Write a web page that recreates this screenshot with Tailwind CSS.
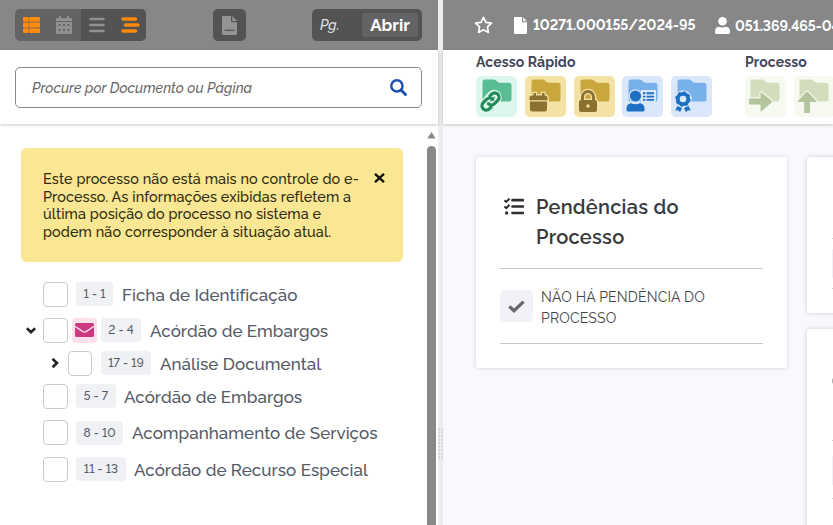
<!DOCTYPE html>
<html lang="pt-BR">
<head>
<meta charset="utf-8">
<title>e-Processo</title>
<script src="https://cdn.jsdelivr.net/npm/@tailwindcss/browser@4"></script>
</head>
<body class="w-[833px] h-[525px] overflow-hidden bg-white font-['Raleway','Lato','Open_Sans',sans-serif] lining-nums whitespace-nowrap">
<svg class="hidden">
  <symbol id="folder" viewBox="0 0 41 41"><path d="M9 3.5h8.5q1.5 0 2.5 1l1.800 1.500q1 .8 2.500.8H33q2.500 0 2.500 2.500V23q0 2.500-2.500 2.500H9Q6.500 25.500 6.500 23V6Q6.500 3.500 9 3.500z"/></symbol>
</svg>
<div class="flex h-full">
  <aside class="w-[438px] shrink-0 flex flex-col bg-white">
    <header class="h-[50px] shrink-0 bg-[#878787] pl-[15px] pt-[9px] flex items-start">
      <div class="flex h-8 w-[131px] rounded-[5px] overflow-hidden bg-[#636363]">
        <div class="w-[66px] flex items-center">
          <svg class="ml-2 w-[17px] h-[16px]" viewBox="0 0 17 16" fill="#ff8b0d"><path fill="#a87038" d="M1 1h15v14H1z"/><path d="M1 0h4.500v4.500H0V1q0-1 1-1zM6.500 0H16q1 0 1 1v3.500H6.500zM0 5.700h5.500v4.500H0zM6.500 5.700H17v4.500H6.500zM0 11.400h5.500V16H1q-1 0-1-1zM6.500 11.400H17V15q0 1-1 1H6.500z"/></svg>
          <svg class="ml-4 w-4 h-[18px]" viewBox="0 0 16 18"><path fill="#909090" d="M3 0h2v2h6V0h2v2h1.500Q16 2 16 3.500V5H0V3.500Q0 2 1.500 2H3zM0 6h16v10.500q0 1.500-1.500 1.500h-13Q0 18 0 16.500z"/><path d="M2.500 8h2v2h-2zM7 8h2v2H7zM11.500 8h2v2h-2zM2.500 13h2v2h-2zM7 13h2v2H7zM11.500 13h2v2h-2z" fill="#636363"/></svg>
        </div>
        <div class="flex-1 bg-[#535353] flex items-center">
          <svg class="ml-2 w-4 h-4" viewBox="0 0 16 16" stroke="#909090" stroke-width="2.300" stroke-linecap="round"><path d="M1.300 2h13.400M1.300 8h13.400M1.300 14h13.400"/></svg>
          <svg class="ml-4 w-[19px] h-4" viewBox="0 0 19 16" stroke="#ff8b0d" stroke-width="3.500" stroke-linecap="round"><path d="M2 2h12.500M4.500 8h12.500M2 14h12.500"/></svg>
        </div>
      </div>
      <div class="ml-[66.500px] w-[33px] h-8 rounded-[5px] bg-[#535353] flex items-center justify-center">
        <svg class="w-[15px] h-[19px]" viewBox="0 0 15 19"><path fill="#949494" d="M1.200 0H9v5q0 1.200 1.200 1.200H15V17.800Q15 19 13.800 19H1.200Q0 19 0 17.800V1.200Q0 0 1.200 0zM10.200 0L15 5H10.200z"/><path stroke="#535353" stroke-width="1.300" d="M2.500 14.300h10"/></svg>
      </div>
      <div class="ml-[66.500px] w-[110px] h-8 rounded-[5px] bg-[#535353] flex items-center pl-2 pr-1">
        <span class="italic font-medium text-[14px] text-[#e4e4e4]">Pg.</span>
        <span class="ml-auto w-[56px] h-6 rounded-[3px] bg-[#636363] text-white font-bold text-[17px] leading-[25px] text-center">Abrir</span>
      </div>
    </header>
    <div class="h-[74px] shrink-0 pt-[17px] pl-[15px] bg-white shadow-[0_1px_3px_rgba(0,0,0,0.22)] z-10">
      <div class="w-[407px] h-[41px] border border-[#888] rounded-[5px] flex items-center justify-between pl-4 pr-[14px]">
        <span class="italic font-medium text-[14px] leading-5 pt-px tracking-[0.04px] text-[#666]">Procure por Documento ou Página</span>
        <svg class="w-[17px] h-[17px]" viewBox="0 0 17 17" fill="none" stroke="#1c50b0"><circle cx="6.900" cy="6.900" r="5.600" stroke-width="2.400"/><path d="M11 11l4.500 4.500" stroke-width="2.900" stroke-linecap="round"/></svg>
      </div>
    </div>
    <div class="flex-1 flex">
      <main class="w-[427px] pl-[21px] pt-6">
        <div class="w-[382px] h-[114px] rounded-[6px] bg-[#f9e793] pl-[22px] pt-[22px] flex items-start text-[#302b12] font-medium text-[14.400px] leading-[17.700px]">
          <p class="w-[331px] tracking-[0.11px]">Este processo não está mais no controle do e-<br>Processo. As informações exibidas refletem a<br>última posição do processo no sistema e<br>podem não corresponder à situação atual.</p>
          <svg class="mt-[3px] w-[11px] h-[10px]" viewBox="0 0 11 10" stroke="#111" stroke-width="2.300"><path d="M1 .8l9 8.400M10 .8L1 9.200"/></svg>
        </div>
        <ul class="pt-[13.500px] text-[17px] font-medium tracking-[0.04px] text-[#545a67]">
          <li class="h-[37px] flex items-center pl-[22px]"><i class="w-[25px] h-[25px] rounded-[4px] border border-[#c9c9cf]"></i><b class="ml-2 w-[37px] h-6 rounded-[4px] bg-[#f0f1f4] font-medium text-[12px] leading-6 text-center text-[#555b66]">1 - 1</b><span class="ml-[9px] pt-[3px]">Ficha de Identificação</span></li>
          <li class="h-[35px] flex items-center pl-[5px]"><svg class="w-[10px] h-[7px] mr-[7px]" viewBox="0 0 10 7" fill="none" stroke="#222" stroke-width="2.600"><path d="M.8 1.300L5 5.200 9.200 1.300"/></svg><i class="w-[25px] h-[25px] rounded-[4px] border border-[#c9c9cf]"></i><em class="ml-1 w-[25px] h-[25px] rounded-[4px] bg-[#fbe0ec] flex items-center justify-center"><svg class="mr-px w-[19px] h-[14px]" viewBox="0 0 19 14"><rect width="19" height="14" rx="1.500" fill="#cb3980"/><path d="M0 3.200l7.500 5.200q2 1.300 4 0L19 3.200" fill="none" stroke="#fbe0ec" stroke-width="1.300"/></svg></em><b class="ml-1 w-10 h-6 rounded-[4px] bg-[#f0f1f4] font-medium text-[12px] leading-[25px] text-center text-[#555b66]">2 - 4</b><span class="ml-[9px] pt-[3px]">Acórdão de Embargos</span></li>
          <li class="h-[31px] flex items-center pl-[30px]"><svg class="w-[8px] h-[10px] mr-[9px]" viewBox="0 0 8 10" fill="none" stroke="#222" stroke-width="2.600"><path d="M1.500.8L6 5 1.500 9.200"/></svg><i class="w-[24px] h-[25px] rounded-[4px] border border-[#c9c9cf]"></i><b class="ml-[9px] w-[50px] h-6 rounded-[4px] bg-[#f0f1f4] font-medium text-[12px] leading-[25px] text-center text-[#555b66]">17 - 19</b><span class="ml-[9px] pt-[3px]">Análise Documental</span></li>
          <li class="h-[35px] flex items-center pl-[22px]"><i class="w-[25px] h-[25px] rounded-[4px] border border-[#c9c9cf]"></i><b class="ml-2 w-10 h-6 rounded-[4px] bg-[#f0f1f4] font-medium text-[12px] leading-6 text-center text-[#555b66]">5 - 7</b><span class="ml-[8px] pt-[3px]">Acórdão de Embargos</span></li>
          <li class="h-[38px] flex items-center pl-[22px]"><i class="w-[25px] h-[25px] rounded-[4px] border border-[#c9c9cf]"></i><b class="ml-2 w-[47px] h-6 rounded-[4px] bg-[#f0f1f4] font-medium text-[12px] leading-6 text-center text-[#555b66]">8 - 10</b><span class="ml-[9px] pt-[2px]">Acompanhamento de Serviços</span></li>
          <li class="h-[35px] flex items-center pl-[22px]"><i class="w-[25px] h-[25px] rounded-[4px] border border-[#c9c9cf]"></i><b class="ml-2 w-[50px] h-6 rounded-[4px] bg-[#f0f1f4] font-medium text-[12px] leading-[25px] text-center text-[#555b66]">11 - 13</b><span class="ml-[8px] pt-[3px]">Acórdão de Recurso Especial</span></li>
        </ul>
      </main>
      <div class="w-[9px] flex flex-col items-center pt-2">
        <svg class="w-[9px] h-[7px] shrink-0" viewBox="0 0 9 7" fill="#868686"><path d="M4.500 0L8.600 6.500H.4z"/></svg>
        <div class="mt-[7px] w-[9px] flex-1 rounded-t-[4.500px] bg-[#888]"></div>
      </div>
    </div>
  </aside>
  <div class="w-[5px] shrink-0 bg-[#ededed] flex flex-col">
    <svg class="mt-[428px] w-[5px] h-8" viewBox="0 0 5 32" stroke="#cfcfcf" stroke-width="1.500" stroke-dasharray="2 1.500"><path d="M1.200 0v32M4.200 0v32"/></svg>
  </div>
  <section class="w-[390px] shrink-0 flex flex-col bg-[#f7f9fd]">
    <header class="h-[50px] shrink-0 bg-[#878787] pl-[31px] flex items-center text-white font-bold text-[14px] overflow-hidden">
      <svg class="w-[19px] h-[18px] shrink-0" viewBox="0 0 19 18" fill="none" stroke="#fff" stroke-width="1.700" stroke-linejoin="round"><path d="M9.500 1.300l2.450 5 5.500.8-4 3.850.95 5.450-4.900-2.600-4.900 2.600.95-5.450-4-3.850 5.500-.8z"/></svg>
      <svg class="ml-[21px] w-[13px] h-[17px] shrink-0" viewBox="0 0 13 17"><path fill="#fff" d="M1 0h7v4.500q0 .8.8.8H13V16q0 1-1 1H1q-1 0-1-1V1q0-1 1-1z"/><path fill="#eee" d="M9 0l4 4.300H9z"/></svg>
      <span class="ml-[6px] w-[162px] shrink-0">10271.000155/2024-95</span>
      <svg class="ml-[20px] w-[15px] h-[17px] shrink-0" viewBox="0 0 15 17" fill="#fff"><circle cx="7.500" cy="4.300" r="4.300"/><path d="M4 9.800q3.500 1.500 7 0 4 .2 4 5v.8q0 1.400-1.400 1.400H1.400Q0 17 0 15.600v-.8q0-4.800 4-5z"/></svg>
      <span class="ml-[5px] shrink-0 pt-[2px]">051.369.465-04</span>
    </header>
    <div class="h-[74px] shrink-0 bg-white pl-[33px] pt-[2px] flex shadow-[0_1px_3px_rgba(0,0,0,0.22)] z-10 overflow-x-clip">
      <div class="w-[269px] shrink-0">
        <h2 class="h-[23.500px] leading-[20px] text-[14px] tracking-[0.1px] font-bold text-[#42465a]">Acesso Rápido</h2>
        <div class="flex gap-[7.800px]">
          <svg class="w-[41px] h-[41px] rounded-[5px] bg-[#dcf8ec]" viewBox="0 0 41 41"><use href="#folder" fill="#58bd93"/><g transform="translate(14.500 25.500) rotate(-45)" fill="none" stroke-linecap="round"><g stroke="#dcf8ec" stroke-width="6.500"><path d="M2-4h-7.500a4.300 4.300 0 0 0 0 8.600H-1M-2 4h7.500a4.300 4.300 0 0 0 0-8.600H1"/></g><path stroke="#25895c" stroke-width="3.200" d="M3 0A4.200 4.200 0 0 0-1-4.300h-5a4.300 4.300 0 0 0 0 8.600h2.500M-3 0a4.200 4.200 0 0 0 4 4.300h5a4.300 4.300 0 0 0 0-8.600H3.500"/></g></svg>
          <svg class="w-[41px] h-[41px] rounded-[5px] bg-[#f4e2a4]" viewBox="0 0 41 41"><use href="#folder" fill="#c9a73d"/><path fill="#8a7130" stroke="#f4e2a4" stroke-width="2.400" paint-order="stroke" d="M8.500 17H11v2.500h6V17h2.500v2.500H20q2.500 0 2.500 2.500v2.200h-18V22q0-2.500 2.500-2.500h1.500zM5 25.500h17V33q0 2.500-2.500 2.500h-12Q5 35.500 5 33z"/></svg>
          <svg class="w-[41px] h-[41px] rounded-[5px] bg-[#f4e2a4]" viewBox="0 0 41 41"><use href="#folder" fill="#c9a73d"/><path fill="none" stroke="#f4e2a4" stroke-width="5.500" d="M8.500 25v-4a5.500 5.500 0 0 1 11 0v4"/><rect x="5" y="24" width="18" height="12" rx="2" fill="#8a7130" stroke="#f4e2a4" stroke-width="2.400" paint-order="stroke"/><path fill="none" stroke="#8a7130" stroke-width="2.900" d="M8.500 25v-4a5.500 5.500 0 0 1 11 0v4"/><circle cx="14" cy="30" r="1.700" fill="#f4e2a4"/></svg>
          <svg class="w-[41px] h-[41px] rounded-[5px] bg-[#dae7fa]" viewBox="0 0 41 41"><use href="#folder" fill="#78b0ea"/><path fill="#dae7fa" d="M19 14h15v12H19z"/><g fill="#1e70c5" stroke="#dae7fa" stroke-width="2.400" paint-order="stroke"><circle cx="13.500" cy="20" r="5.600"/><path d="M9 27.200q4.500 2 9 0 4.500.5 4.500 5.500v1.300q0 1.500-1.500 1.500H6Q4.500 35.500 4.500 34v-1.300q0-5 4.500-5.500z"/></g><path stroke="#1e70c5" stroke-width="1.900" d="M21 17.300h2.300M24.500 17.300H32M21 20.600h2.300M24.500 20.600H32M21 23.900h2.300M24.500 23.900H32"/></svg>
          <svg class="w-[41px] h-[41px] rounded-[5px] bg-[#dae7fa]" viewBox="0 0 41 41"><use href="#folder" fill="#78b0ea"/><circle cx="12" cy="23" r="8.800" fill="#dae7fa"/><circle cx="12" cy="23" r="5.200" fill="none" stroke="#1e70c5" stroke-width="3.800"/><circle cx="12" cy="23" r="7" fill="none" stroke="#1e70c5" stroke-width="1.500" stroke-dasharray="2.750 2.750"/><path fill="#1e70c5" d="M6.500 30l4.500 2-2 4.300-1.800-2-3 .2zM17.500 30L13 32l2 4.300 1.800-2 3 .2z"/></svg>
        </div>
      </div>
      <div class="shrink-0">
        <h2 class="h-[23.500px] leading-[20px] text-[14px] tracking-[0.1px] font-bold text-[#42465a]">Processo</h2>
        <div class="flex gap-[7.800px]">
          <svg class="w-[41px] h-[41px] rounded-[5px] bg-[#f6f9ef]" viewBox="0 0 41 41"><use href="#folder" fill="#d2ddbd" x="-1"/><path fill="#b4c49c" stroke="#f6f9ef" stroke-width="2.400" paint-order="stroke" d="M5 22.500h10.500v-5q0-2 1.500-.6l9 7.200q1.300 1.400 0 2.800l-9 7.800q-1.500 1.400-1.500-.6V28.500H5q-1 0-1-1v-4q0-1 1-1z"/></svg>
          <svg class="w-[41px] h-[41px] rounded-[5px] bg-[#f6f9ef]" viewBox="0 0 41 41"><use href="#folder" fill="#d2ddbd" x="-1"/><path fill="#b4c49c" stroke="#f6f9ef" stroke-width="2.400" paint-order="stroke" d="M10.200 36V26H5q-2 0-.6-1.500l7.300-8q1.400-1.400 2.800 0l7.300 8q1.400 1.500-.6 1.500H16v10q0 1-1 1h-3.800q-1 0-1-1z"/></svg>
        </div>
      </div>
    </div>
    <div class="flex-1 flex items-start gap-5 pl-[33px] pt-[33px] overflow-hidden">
      <article class="w-[311px] h-[211px] shrink-0 bg-white rounded-[2px] shadow-[0_0_4px_rgba(50,55,75,0.2)] px-6 pt-[35px]">
        <div class="flex h-[77px] border-b border-[#c9c9c9]">
          <svg class="ml-1 mt-[6px] w-[20px] h-[17px]" viewBox="0 0 20 17" fill="none" stroke="#2e2e30" stroke-width="2.700"><path stroke-linecap="round" d="M8.500 2.200h10.500M8.500 8.500h10.500M8.500 15h10.500"/><path stroke-width="2" d="M.5 2.300l1.800 1.600L5.500.6M.5 8.500l1.800 1.600 3.200-3.300"/><circle cx="2.600" cy="15" r=".8" stroke-width="1.700"/></svg>
          <h3 class="ml-[12px] text-[20px] leading-[30px] font-semibold tracking-[0.25px] text-[#39393d]">Pendências do<br>Processo</h3>
        </div>
        <div class="flex h-[75px] border-b border-[#c9c9c9] pt-[17px]">
          <div class="mt-[4px] w-[33px] h-[32px] rounded-[5px] bg-[#f1f2f7] flex items-center justify-center"><svg class="w-[17px] h-[13px]" viewBox="0 0 17 13" fill="none" stroke="#66666a" stroke-width="3.200"><path d="M1.300 6.300l4.700 4.400 9.600-9"/></svg></div>
          <p class="ml-2 pt-px text-[14px] leading-[21px] tracking-[0.18px] text-[#454548]">NÃO HÁ PENDÊNCIA DO<br>PROCESSO</p>
        </div>
      </article>
      <div class="w-[40px] shrink-0 flex flex-col gap-4">
        <div class="h-[156px] bg-white rounded-[2px] shadow-[0_0_4px_rgba(50,50,50,0.22)] pl-[25px] pt-[81px]"><div class="w-3 h-px bg-[#ccc]"></div><div class="mt-[10px] h-[29px] w-3 bg-[#f1f2f7]"></div><div class="mt-[10px] w-3 h-px bg-[#ccc]"></div></div>
        <div class="h-[220px] bg-white rounded-[2px] shadow-[0_0_4px_rgba(50,50,50,0.22)] pl-[25px] pt-[48px]"><div class="w-2 h-2 rounded-full border-2 border-[#aaa]"></div><div class="mt-[55px] w-3 h-px bg-[#ccc]"></div><div class="mt-[15px] h-[29px] w-3 bg-[#f1f2f7]"></div><div class="mt-[13px] w-3 h-px bg-[#ccc]"></div></div>
      </div>
    </div>
  </section>
</div>
</body>
</html>
